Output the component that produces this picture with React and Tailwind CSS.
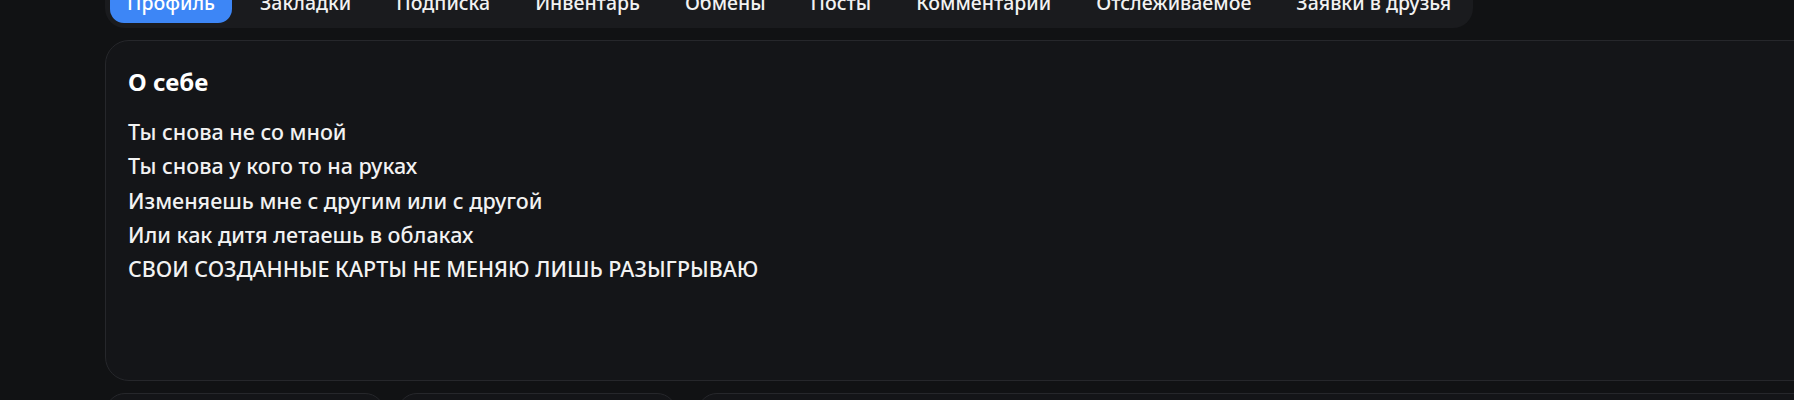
import { useState } from 'react';

const tabs = [
  'Профиль',
  'Закладки',
  'Подписка',
  'Инвентарь',
  'Обмены',
  'Посты',
  'Комментарии',
  'Отслеживаемое',
  'Заявки в друзья',
];

const about = [
  'Ты снова не со мной',
  'Ты снова у кого то на руках',
  'Изменяешь мне с другим или с другой',
  'Или как дитя летаешь в облаках',
  'СВОИ СОЗДАННЫЕ КАРТЫ НЕ МЕНЯЮ ЛИШЬ РАЗЫГРЫВАЮ',
];

export default function App() {
  const [active, setActive] = useState(0);

  return (
    <div
      className="w-full h-[400px] overflow-hidden bg-[#111214] text-[#f2f2f2]"
      style={{ fontFamily: '"Noto Sans", Roboto, sans-serif' }}
    >
      <div className="ml-[105px] -mt-[22px] w-[1760px] flex flex-col gap-3">

        {/* Profile tabs */}
        <div className="w-fit flex items-center gap-[11px] p-[5px] rounded-[20px] bg-[#1a1b1e]">
          {tabs.map((tab, i) => (
            <button
              key={tab}
              onClick={() => setActive(i)}
              className={
                i === active
                  ? 'h-[40px] px-[17px] rounded-[14px] bg-[#3d86f6] text-white text-[19.5px] font-medium leading-none'
                  : 'h-[40px] px-[17px] rounded-[14px] text-[#f2f2f2] text-[19.5px] font-medium leading-none'
              }
            >
              {tab}
            </button>
          ))}
        </div>

        {/* About block */}
        <div className="h-[341px] rounded-3xl border border-[#26272b] bg-[#141518] pl-[22px] pt-[25px]">
          <h2 className="text-[24px] leading-[32px] font-bold text-white">О себе</h2>
          <div className="mt-[17px] text-[21.5px] leading-[34.3px] font-medium">
            {about.map((line) => (
              <p key={line}>{line}</p>
            ))}
          </div>
        </div>

        {/* Stat cards row */}
        <div className="flex gap-5">
          <div className="flex gap-3">
            <div className="w-[280px] h-[160px] rounded-[20px] border border-[#26272b] bg-[#141518]"></div>
            <div className="w-[280px] h-[160px] rounded-[20px] border border-[#26272b] bg-[#141518]"></div>
          </div>
          <div className="flex-1 h-[160px] rounded-[20px] border border-[#26272b] bg-[#141518]"></div>
        </div>

      </div>
    </div>
  );
}
